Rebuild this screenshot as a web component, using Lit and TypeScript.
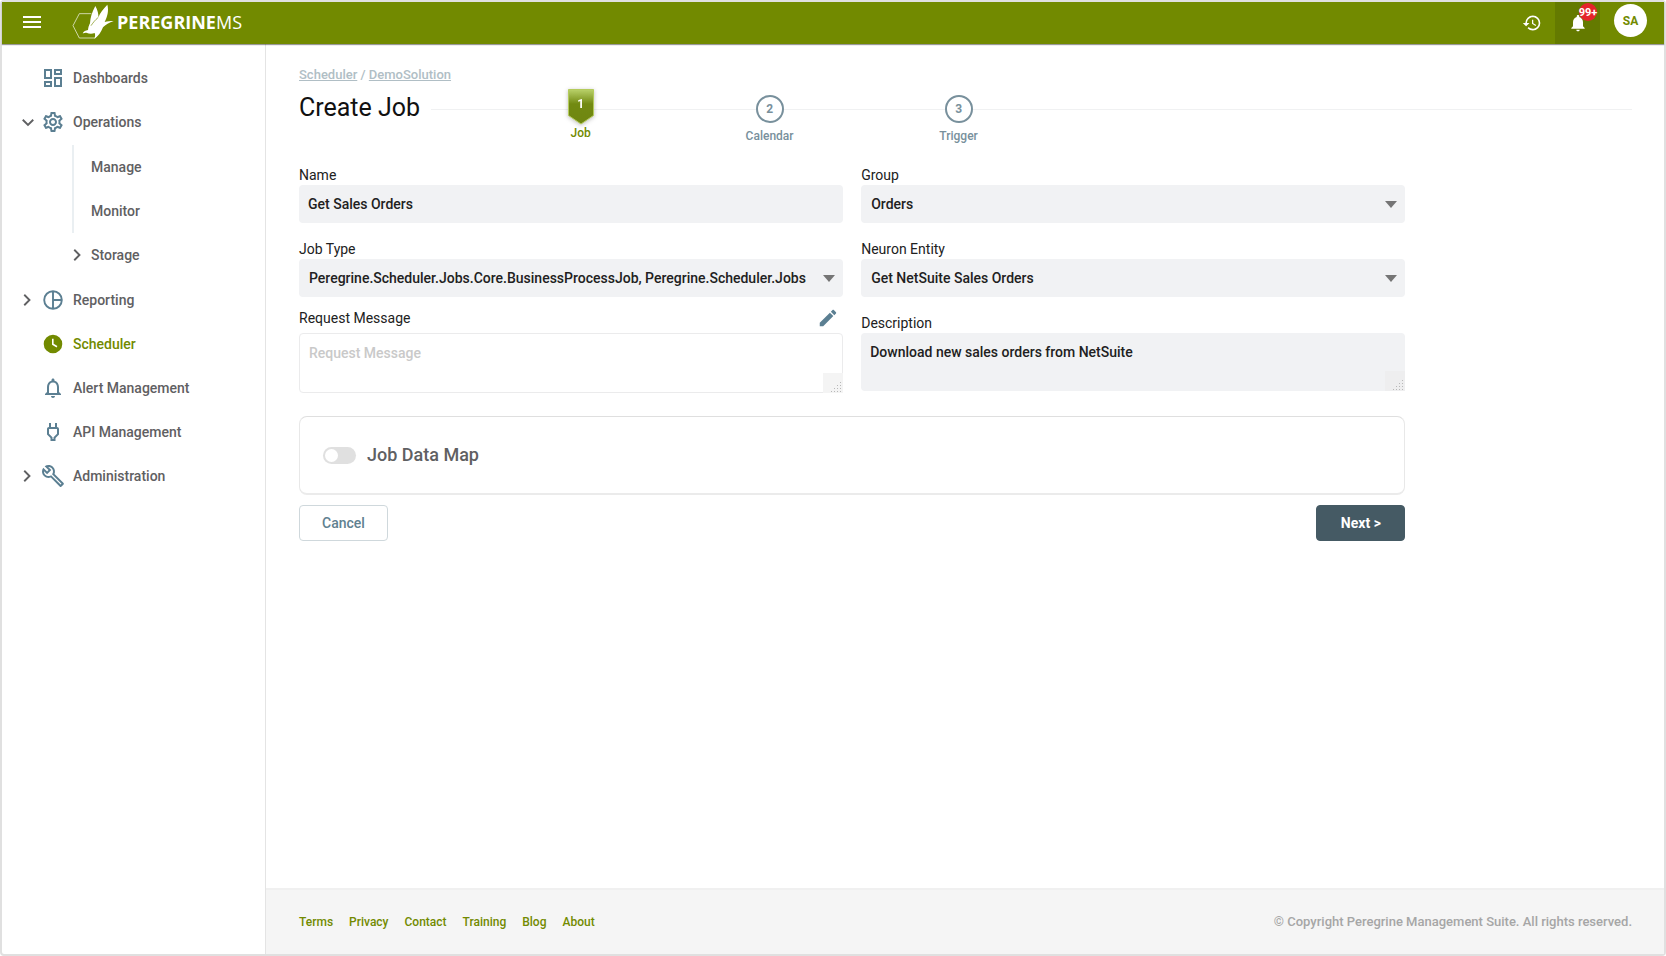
import { LitElement, html, css, svg, nothing } from "lit";
import { customElement, property, state } from "lit/decorators.js";
import { classMap } from "lit/directives/class-map.js";

const icons: Record<string, unknown> = {
  dashboard: svg`<path d="M19 5v2h-4V5h4M9 5v6H5V5h4m10 8v6h-4v-6h4M9 17v2H5v-2h4M21 3h-8v6h8V3zM11 3H3v10h8V3zm10 8h-8v10h8V11zm-10 4H3v6h8v-6z"/>`,
  settings: svg`<path d="M19.43 12.98c.04-.32.07-.64.07-.98 0-.34-.03-.66-.07-.98l2.11-1.65c.19-.15.24-.42.12-.64l-2-3.46c-.09-.16-.26-.25-.44-.25-.06 0-.12.01-.17.03l-2.49 1c-.52-.4-1.08-.73-1.69-.98l-.38-2.65C14.46 2.18 14.25 2 14 2h-4c-.25 0-.46.18-.49.42l-.38 2.65c-.61.25-1.17.59-1.69.98l-2.49-1c-.06-.02-.12-.03-.18-.03-.17 0-.34.09-.43.25l-2 3.46c-.13.22-.07.49.12.64l2.11 1.65c-.04.32-.07.65-.07.98 0 .33.03.66.07.98l-2.11 1.65c-.19.15-.24.42-.12.64l2 3.46c.09.16.26.25.44.25.06 0 .12-.01.17-.03l2.49-1c.52.4 1.08.73 1.69.98l.38 2.65c.03.24.24.42.49.42h4c.25 0 .46-.18.49-.42l.38-2.65c.61-.25 1.17-.59 1.69-.98l2.49 1c.06.02.12.03.18.03.17 0 .34-.09.43-.25l2-3.46c.12-.22.07-.49-.12-.64l-2.11-1.65zm-1.98-1.71c.04.31.05.52.05.73 0 .21-.02.43-.05.73l-.14 1.13.89.7 1.08.84-.7 1.21-1.27-.51-1.04-.42-.9.68c-.43.32-.84.56-1.25.73l-1.06.43-.16 1.13-.2 1.35h-1.4l-.19-1.35-.16-1.13-1.06-.43c-.43-.18-.83-.41-1.23-.71l-.91-.7-1.06.43-1.27.51-.7-1.21 1.08-.84.89-.7-.14-1.13c-.03-.31-.05-.54-.05-.74s.02-.43.05-.73l.14-1.13-.89-.7-1.08-.84.7-1.21 1.27.51 1.04.42.9-.68c.43-.32.84-.56 1.25-.73l1.06-.43.16-1.13.2-1.35h1.39l.19 1.35.16 1.13 1.06.43c.43.18.83.41 1.23.71l.91.7 1.06-.43 1.27-.51.7 1.21-1.07.85-.89.7.14 1.13zM12 8c-2.21 0-4 1.79-4 4s1.79 4 4 4 4-1.79 4-4-1.79-4-4-4zm0 6c-1.1 0-2-.9-2-2s.9-2 2-2 2 .9 2 2-.9 2-2 2z"/>`,
  pie: svg`<path fill="none" stroke="currentColor" stroke-width="1.9" d="M12 3.2a8.8 8.8 0 1 0 0 17.6 8.8 8.8 0 0 0 0-17.6zM12 3.2v17.6M12 12h8.8"/>`,
  clock: svg`<path fill-rule="evenodd" d="M12 2.7a9.3 9.3 0 1 0 0 18.6 9.3 9.3 0 0 0 0-18.6zM11 6.8h1.6v5l3.8 2.3-.8 1.3L11 12.700z"/>`,
  bell: svg`<path d="M12 22c1.100 0 2-.9 2-2h-4c0 1.100.9 2 2 2zm6-6v-5c0-3.070-1.630-5.640-4.500-6.320V4c0-.83-.67-1.500-1.500-1.500s-1.500.67-1.500 1.500v.68C7.640 5.360 6 7.920 6 11v5l-2 2v1h16v-1l-2-2zm-2 1H8v-6c0-2.480 1.510-4.500 4-4.500s4 2.020 4 4.500v6z"/>`,
  bellFilled: svg`<path d="M12 22c1.100 0 2-.9 2-2h-4c0 1.100.89 2 2 2zm6-6v-5c0-3.070-1.640-5.640-4.500-6.320V4c0-.83-.67-1.500-1.500-1.500s-1.500.67-1.500 1.500v.68C7.630 5.360 6 7.920 6 11v5l-2 2v1h16v-1l-2-2z"/>`,
  plug: svg`<path d="M16 9v4.660l-3.500 3.510V19h-1v-1.830L8 13.650V9h8m0-6h-2v4h-4V3H8v4h-.01C6.900 6.990 6 7.890 6 8.980v5.520L9.500 18v3h5v-3l3.500-3.510V9c0-1.100-.9-2-2-2V3z"/>`,
  wrench: svg`<path d="M22.610 18.990l-9.080-9.080c.93-2.340.45-5.100-1.440-7C9.790.61 6.210.4 3.660 2.260L7.500 6.110 6.080 7.520 2.250 3.690C.39 6.230.6 9.820 2.900 12.110c1.860 1.860 4.570 2.350 6.890 1.480l9.110 9.110c.39.39 1.020.39 1.410 0l2.300-2.300c.4-.38.4-1.010 0-1.410zm-3 1.600l-9.460-9.460c-.61.45-1.290.72-2 .82-1.360.2-2.790-.21-3.830-1.250C3.370 9.760 2.930 8.500 3 7.260l3.090 3.090 4.240-4.240-3.090-3.090c1.240-.07 2.490.37 3.440 1.310 1.080 1.080 1.490 2.570 1.240 3.960-.12.71-.42 1.370-.88 1.960l9.450 9.450-.88.890z"/>`,
  history: svg`<path d="M13 3a9 9 0 0 0-9 9H1l3.890 3.890.07.14L9 12H6c0-3.870 3.130-7 7-7s7 3.130 7 7-3.130 7-7 7c-1.930 0-3.680-.79-4.940-2.060l-1.420 1.420A8.950 8.950 0 0 0 13 21a9 9 0 0 0 0-18zm-1 5v5l4.280 2.540.72-1.210-3.500-2.080V8H12z"/>`,
  pencil: svg`<path d="M3 17.250V21h3.750L17.810 9.940l-3.750-3.750L3 17.250zM20.710 7.040c.39-.39.39-1.020 0-1.410l-2.340-2.340c-.39-.39-1.020-.39-1.410 0l-1.830 1.830 3.750 3.750 1.830-1.830z"/>`,
  menu: svg`<path d="M3 18h18v-2H3v2zm0-5h18v-2H3v2zm0-7v2h18V6H3z"/>`,
  down: svg`<path fill="none" stroke="currentColor" stroke-width="2.500" d="M5 9l7 7 7-7"/>`,
  right: svg`<path fill="none" stroke="currentColor" stroke-width="2.500" d="M7 5l7 7-7 7"/>`,
};

const icon = (name: string, size = 24) =>
  html`<svg class="icon" viewBox="0 0 24 24" width=${size} height=${size} fill="currentColor" aria-hidden="true">${icons[name]}</svg>`;

const base = css`
  *, *::before, *::after { box-sizing: border-box; }
  .icon { display: block; flex: none; }
  a { color: inherit; text-decoration: none; }
  ul, ol { list-style: none; margin: 0; padding: 0; }
  button, input, select, textarea { font: inherit; color: inherit; margin: 0; }
`;

@customElement("pg-header")
export class PgHeader extends LitElement {
  static styles = [base, css`
    :host { display: block; background: #728a00; color: #fff; box-shadow: 0 1px 1px rgba(0, 0, 0, 0.4); position: relative; }
    .bar { display: flex; align-items: center; height: 42px; padding: 0 17px 0 18px; }
    .start { display: flex; align-items: center; gap: 28px; height: 40px; align-self: flex-start; }
    .plain { border: 0; background: none; padding: 0; display: flex; align-items: center; justify-content: center; cursor: pointer; }
    .brand { display: flex; align-items: center; gap: 3px; font-family: "Open Sans", sans-serif; font-size: 18px; line-height: 24px; }
    .mark { display: block; }
    .strong { font-weight: 700; }
    .spacer { flex: 1; }
    .history { width: 46px; height: 42px; }
    .alerts { position: relative; width: 45px; height: 42px; background: #647a00; }
    .badge { position: absolute; left: 24px; top: 1px; width: 18px; height: 18px; border-radius: 9px; background: #e5232b; font-size: 11px; font-weight: 700; line-height: 19px; display: flex; justify-content: center; }
    .avatar { width: 33px; height: 33px; border-radius: 50%; background: #fff; color: #728a00; font-size: 12px; font-weight: 700; margin: 2px 0 0 14px; align-self: flex-start; }
  `];

  render() {
    return html`
      <header class="bar">
        <div class="start">
        <button class="plain" aria-label="Menu">${icon("menu")}</button>
        <a class="brand" href="#">
          <svg class="mark" viewBox="218 6 126 114" width="42" height="38" aria-hidden="true">
            <path d="M276 38H240L221 74l19 37h48l6-12" fill="none" stroke="#fff" stroke-opacity=".65" stroke-width="3"/>
            <path d="M250 97c3-6 9-9 16-10 1-8 3-14 6-20 1-18 6-34 16-52 7 12 10 24 9 34 6-14 14-25 27-38 5 18 0 36-8 52 9-2 16-3 27-3-13 4-25 11-32 19-6 15-14 27-26 34 3-7 3-12 1-17-8 3-16 3-25-1-4 0-7 2-11 2z" fill="#fff"/>
            <path d="M275 74c5-7 12-17 22-25" fill="none" stroke="#728a00" stroke-width="2"/>
          </svg>
          <span><span class="strong">PEREGRINE</span>MS</span>
        </a>
        </div>
        <span class="spacer"></span>
        <button class="plain history" aria-label="History">${icon("history", 20)}</button>
        <button class="plain alerts" aria-label="Notifications">${icon("bellFilled", 20)}<span class="badge">99+</span></button>
        <button class="plain avatar">SA</button>
      </header>`;
  }
}

interface NavItem { label: string; icon?: string; open?: boolean; expandable?: boolean; active?: boolean; children?: NavItem[]; }

const NAV: NavItem[] = [
  { label: "Dashboards", icon: "dashboard" },
  { label: "Operations", icon: "settings", expandable: true, open: true, children: [
    { label: "Manage" }, { label: "Monitor" }, { label: "Storage", expandable: true } ] },
  { label: "Reporting", icon: "pie", expandable: true },
  { label: "Scheduler", icon: "clock", active: true },
  { label: "Alert Management", icon: "bell" },
  { label: "API Management", icon: "plug" },
  { label: "Administration", icon: "wrench", expandable: true },
];

@customElement("pg-nav")
export class PgNav extends LitElement {
  static styles = [base, css`
    :host { display: block; padding: 12px 0; border-right: 1px solid #e4e4e4; color: #5f6062; font-size: 14px; font-weight: 500; }
    .row { display: grid; grid-template-columns: 22px 24px 1fr; align-items: center; height: 44px; padding-left: 17px; }
    .glyph { color: #5b7f92; }
    .text { margin-left: 8px; }
    .chevron { display: flex; width: 18px; color: #5f6062; }
    .active, .active .glyph { color: #728a00; }
    .sub { padding: 1px 0; }
    .leaf { display: flex; align-items: center; height: 44px; margin-left: 70px; padding-left: 17px; border-left: 2px solid #eaeff2; }
    .group { margin-left: 65px; padding-left: 0; border-color: transparent; }
    .group .chevron { width: 22px; }
  `];

  private child(c: NavItem) {
    return html`<li><a href="#" class=${classMap({ leaf: true, group: !!c.expandable })}>
      ${c.expandable ? html`<span class="chevron">${icon("right", 18)}</span>` : nothing}<span>${c.label}</span></a></li>`;
  }

  render() {
    return html`<nav aria-label="Main"><ul>
      ${NAV.map((n) => html`<li>
        <a href="#" class=${classMap({ row: true, active: !!n.active })}>
          <span class="chevron">${n.expandable ? icon(n.open ? "down" : "right", 18) : nothing}</span>
          <span class="glyph">${icon(n.icon!)}</span>
          <span class="text">${n.label}</span>
        </a>
        ${n.children ? html`<ul class="sub">${n.children.map((c) => this.child(c))}</ul>` : nothing}
      </li>`)}
    </ul></nav>`;
  }
}

@customElement("pg-stepper")
export class PgStepper extends LitElement {
  @property({ type: Array }) steps: string[] = [];
  @property({ type: Number }) current = 0;

  static styles = [base, css`
    :host { display: block; flex: 1; }
    .steps { display: flex; padding-left: 55px; background: linear-gradient(#f0f1f2, #f0f1f2) 0 21px / 100% 1px no-repeat; }
    .step { width: 189px; display: flex; flex-direction: column; align-items: center; color: #78909c; font-size: 12px; line-height: 14px; font-weight: 500; }
    .ring { width: 28px; height: 28px; margin: 7px 0 6px; border: 2px solid #78909c; border-radius: 50%; background: #fff; display: flex; align-items: center; justify-content: center; font-weight: 700; }
    .current { color: #728a00; }
    .flag { width: 28px; height: 36px; margin: 1px 0; display: grid; filter: drop-shadow(0 1px 2px rgba(0, 0, 0, 0.25)); }
    .flag > * { grid-area: 1 / 1; }
    .number { color: #fff; font-weight: 700; line-height: 30px; text-align: center; }
  `];

  render() {
    return html`<ol class="steps">${this.steps.map((label, i) => i === this.current
      ? html`<li class="step current" aria-current="step">
          <span class="flag">
            <svg viewBox="0 0 28 36" width="28" height="36" aria-hidden="true">
              <defs><linearGradient id="g" x1="0" y1="0" x2="0" y2="1">
                <stop offset="0" stop-color="#b9d16a"/><stop offset=".42" stop-color="#728a12"/><stop offset="1" stop-color="#6f8610"/>
              </linearGradient></defs>
              <path d="M1.500.5h25v26L14 35 1.500 26.500z" fill="url(#g)" stroke="#b4cb5c"/>
            </svg>
            <span class="number">${i + 1}</span>
          </span>${label}</li>`
      : html`<li class="step"><span class="ring">${i + 1}</span>${label}</li>`)}</ol>`;
  }
}

@customElement("pg-job-form")
export class PgJobForm extends LitElement {
  @state() private dataMap = false;

  static styles = [base, css`
    :host { display: block; width: 83%; color: #212121; font-size: 14px; }
    .grid { display: grid; grid-template-columns: 1fr 1fr; column-gap: 18px; row-gap: 16px; align-items: start; }
    .field { display: flex; flex-direction: column; min-width: 0; }
    .label { line-height: 20px; }
    .labelrow { display: flex; justify-content: space-between; align-items: center; height: 20px; margin: -5px 0 5px; }
    .edit { border: 0; background: none; padding: 0 4px; color: #5b7f92; }
    .box { display: grid; }
    .box > * { grid-area: 1 / 1; }
    .input { width: 100%; height: 38px; border: 0; border-radius: 4px; background: #f1f2f4; padding: 0 9px; font-weight: 500; line-height: 20px; outline: none; }
    .select { appearance: none; padding: 0 22px 0 10px; text-overflow: clip; }
    .arrow { justify-self: end; align-self: center; margin-right: 8px; pointer-events: none; }
    .area { display: block; height: 58px; padding: 9px; resize: none; }
    .outlined { height: 60px; background: #fff; border: 1px solid #ebebec; }
    .outlined::placeholder { color: #c9c9c9; opacity: 1; }
    .grip { justify-self: end; align-self: end; pointer-events: none; }
    .card { margin-top: 23px; padding: 0 23px; height: 79px; border: 1px solid #dfdfdf; border-bottom-width: 2px; border-color: #dfdfdf #e8e8e8 #ebebeb; border-radius: 8px; display: flex; align-items: center; }
    .toggle { display: flex; align-items: center; gap: 11px; color: #5f6062; font-size: 18px; line-height: 24px; font-weight: 500; }
    .switch { appearance: none; width: 33px; height: 17px; border-radius: 9px; padding: 2px; background: #e0e0e0; display: flex; }
    .switch::before { content: ""; width: 13px; height: 13px; border-radius: 50%; background: #fff; }
    .switch:checked { background: #728a00; justify-content: flex-end; }
    .actions { display: flex; justify-content: space-between; margin-top: 10px; }
    .button { min-width: 89px; height: 36px; border-radius: 4px; border: 1px solid #cfd8dc; background: #fff; color: #5f8190; font-weight: 500; }
    .primary { background: #455a64; border-color: #455a64; color: #fff; font-weight: 700; }
  `];

  private select(id: string, label: string, value: string) {
    return html`<div class="field">
      <label class="label" for=${id}>${label}</label>
      <div class="box">
        <select class="input select" id=${id}><option>${value}</option></select>
        <svg class="arrow" viewBox="0 0 12 7" width="12" height="7" aria-hidden="true"><path d="M0 0h12L6 7z" fill="#757575"/></svg>
      </div></div>`;
  }

  private grip(fill: string) {
    return html`<svg class="grip" viewBox="0 0 20 20" width="20" height="20" aria-hidden="true">
      <rect width="20" height="20" fill=${fill}/>
      <g fill="#b8b8b8">${[[17, 9], [17, 12], [14, 12], [17, 15], [14, 15], [11, 15], [17, 18], [14, 18], [11, 18], [8, 18]].map(
        ([x, y]) => svg`<rect x=${x} y=${y} width="1" height="1"/>`)}</g></svg>`;
  }

  render() {
    return html`<form @submit=${(e: Event) => e.preventDefault()}>
      <div class="grid">
        <div class="field">
          <label class="label" for="name">Name</label>
          <input class="input" id="name" type="text" .value=${"Get Sales Orders"} />
        </div>
        ${this.select("group", "Group", "Orders")}
        ${this.select("type", "Job Type", "Peregrine.Scheduler.Jobs.Core.BusinessProcessJob, Peregrine.Scheduler.Jobs")}
        ${this.select("entity", "Neuron Entity", "Get NetSuite Sales Orders")}
        <div class="field">
          <div class="labelrow"><label class="label" for="message">Request Message</label>
            <button class="edit" type="button" aria-label="Edit request message">${icon("pencil", 22)}</button></div>
          <div class="box">
            <textarea class="input area outlined" id="message" placeholder="Request Message"></textarea>${this.grip("#f4f4f4")}
          </div>
        </div>
        <div class="field">
          <label class="label" for="description">Description</label>
          <div class="box">
            <textarea class="input area" id="description" .value=${"Download new sales orders from NetSuite"}></textarea>${this.grip("#eeeeef")}
          </div>
        </div>
      </div>
      <div class="card">
        <label class="toggle"><input class="switch" type="checkbox" role="switch" .checked=${this.dataMap}
          @change=${(e: Event) => (this.dataMap = (e.target as HTMLInputElement).checked)} />Job Data Map</label>
      </div>
      <div class="actions">
        <button class="button" type="button">Cancel</button>
        <button class="button primary" type="submit">Next &gt;</button>
      </div>
    </form>`;
  }
}

@customElement("app-root")
export class AppRoot extends LitElement {
  static styles = [base, css`
    :host { display: flex; flex-direction: column; min-height: 100vh; box-sizing: border-box; border: 2px solid #e0e0e0; border-radius: 4px; background: #fff; font-family: Roboto, sans-serif; }
    .body { flex: 1; display: grid; grid-template-columns: 264px 1fr; }
    .page { display: flex; flex-direction: column; min-width: 0; }
    .main { flex: 1; padding: 23px 32px 24px 33px; }
    .crumbs { color: #b0bec5; font-size: 13px; line-height: 16px; font-weight: 500; }
    .crumb { text-decoration: underline; }
    .head { display: flex; align-items: flex-start; gap: 11px; margin-top: 5px; margin-bottom: 22px; }
    .title { margin: 5px 0 0; font-size: 25px; line-height: 30px; font-weight: 400; color: #111; }
    .footer { display: flex; justify-content: space-between; align-items: center; min-height: 66px; padding: 0 32px 0 33px; background: #f5f5f5; border-top: 2px solid #f0f0f0; color: #a6a6a6; font-size: 13px; line-height: 16px; font-weight: 500; }
    .links { display: flex; gap: 16px; color: #728a00; font-size: 12px; }
  `];

  render() {
    return html`
      <pg-header></pg-header>
      <div class="body">
        <pg-nav></pg-nav>
        <div class="page">
          <main class="main">
            <div class="crumbs"><a class="crumb" href="#">Scheduler</a> / <a class="crumb" href="#">DemoSolution</a></div>
            <div class="head">
              <h1 class="title">Create Job</h1>
              <pg-stepper .steps=${["Job", "Calendar", "Trigger"]}></pg-stepper>
            </div>
            <pg-job-form></pg-job-form>
          </main>
          <footer class="footer">
            <div class="links">${["Terms", "Privacy", "Contact", "Training", "Blog", "About"].map((t) => html`<a href="#">${t}</a>`)}</div>
            <span>© Copyright Peregrine Management Suite. All rights reserved.</span>
          </footer>
        </div>
      </div>`;
  }
}
